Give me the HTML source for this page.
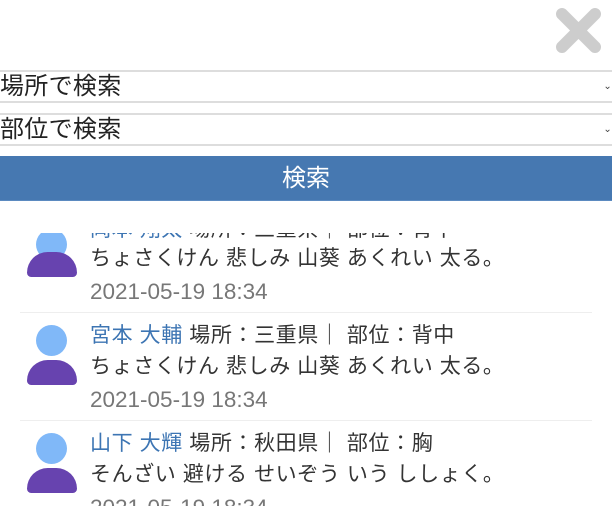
<!DOCTYPE html>
<html><head><meta charset="utf-8"><style>
*{margin:0;padding:0;box-sizing:border-box}
body{width:612px;height:506px;overflow:hidden;background:#fff;font-family:"Liberation Sans","Noto Sans CJK JP",sans-serif;position:relative}
.sel{position:absolute;left:0;width:612px;height:33px;border-top:2px solid #ddd;border-bottom:2px solid #ddd;font-size:24px;line-height:29px;color:#222;padding-left:0;letter-spacing:0.3px}
.sel span.ch{position:absolute;right:0;top:0;font-size:10px;color:#444}
.btn{position:absolute;left:0;top:156px;width:612px;height:45px;background:#4678b1;color:#fff;font-size:24px;text-align:center;line-height:45px;border-bottom:1px solid #5b8ac0}
.list{position:absolute;left:0;top:233px;width:612px;height:273px;overflow:hidden}
.item{position:absolute;left:20px;width:572px;height:108px;border-bottom:1px solid #eee}
.head{position:absolute;left:16px;width:31px;height:31px;border-radius:50%;background:#80b8f8}
.body{position:absolute;left:7px;width:50px;height:25px;background:#6743af;border-radius:24px 24px 5px 5px}
.r{position:absolute;left:70px;font-size:21px;line-height:24px;color:#333;white-space:nowrap;letter-spacing:0.6px}
.n{color:#3d75b3}
.d{color:#777;font-size:22.5px;letter-spacing:0}
</style></head><body>
<svg style="position:absolute;left:555px;top:7px" width="47" height="47" viewBox="0 0 47 47"><path d="M7 7L40 40M40 7L7 40" stroke="#cdcdcd" stroke-width="12" stroke-linecap="round"/></svg>
<div class="sel" style="top:70px">場所で検索<span class="ch">⌄</span></div>
<div class="sel" style="top:113px">部位で検索<span class="ch">⌄</span></div>
<div class="btn">検索</div>
<div class="list">
 <div class="item" style="top:-28px">
  <div class="head" style="top:24px"></div><div class="body" style="top:47px"></div>
  <div class="r" style="top:13px"><span class="n">岡本 翔太</span> 場所：三重県｜ 部位：背中</div>
  <div class="r" style="top:42px">ちょさくけん 悲しみ 山葵 あくれい 太る。</div>
  <div class="r d" style="top:75px">2021-05-19 18:34</div>
 </div>
 <div class="item" style="top:80px">
  <div class="head" style="top:12px"></div><div class="body" style="top:47px"></div>
  <div class="r" style="top:11px"><span class="n">宮本 大輔</span> 場所：三重県｜ 部位：背中</div>
  <div class="r" style="top:42px">ちょさくけん 悲しみ 山葵 あくれい 太る。</div>
  <div class="r d" style="top:75px">2021-05-19 18:34</div>
 </div>
 <div class="item" style="top:188px">
  <div class="head" style="top:12px"></div><div class="body" style="top:47px"></div>
  <div class="r" style="top:11px"><span class="n">山下 大輝</span> 場所：秋田県｜ 部位：胸</div>
  <div class="r" style="top:42px">そんざい 避ける せいぞう いう ししょく。</div>
  <div class="r d" style="top:75px">2021-05-19 18:34</div>
 </div>
</div>
</body></html>
